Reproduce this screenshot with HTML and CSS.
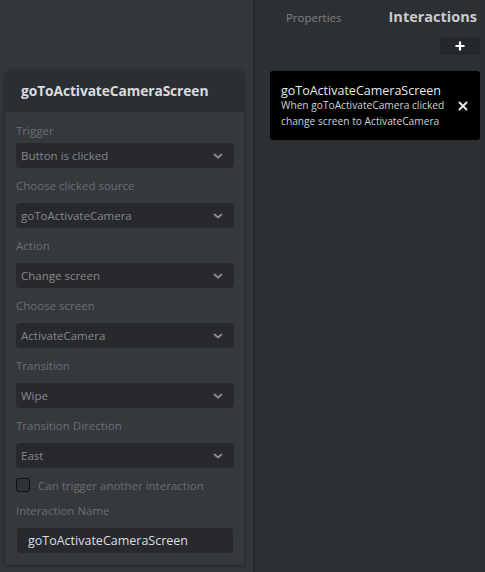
FILE: index.html
```html
<!DOCTYPE html>
<html>
<head>
<meta charset="utf-8">
<link rel="stylesheet" href="styles.css">
</head>
<body>
<div class="app">
  <div class="canvas">
    <div class="card">
      <div class="card-head">goToActivateCameraScreen</div>
      <div class="card-body">
        <div class="field first">
          <div class="label">Trigger</div>
          <div class="select"><span>Button is clicked</span><svg class="chev" viewBox="0 0 10 6" width="10" height="6"><path d="M1 1 L5 4.5 L9 1" fill="none" stroke="#8a8d92" stroke-width="1.8"/></svg></div>
        </div>
        <div class="field">
          <div class="label">Choose clicked source</div>
          <div class="select"><span>goToActivateCamera</span><svg class="chev" viewBox="0 0 10 6" width="10" height="6"><path d="M1 1 L5 4.5 L9 1" fill="none" stroke="#8a8d92" stroke-width="1.8"/></svg></div>
        </div>
        <div class="field">
          <div class="label">Action</div>
          <div class="select"><span>Change screen</span><svg class="chev" viewBox="0 0 10 6" width="10" height="6"><path d="M1 1 L5 4.5 L9 1" fill="none" stroke="#8a8d92" stroke-width="1.8"/></svg></div>
        </div>
        <div class="field">
          <div class="label">Choose screen</div>
          <div class="select"><span>ActivateCamera</span><svg class="chev" viewBox="0 0 10 6" width="10" height="6"><path d="M1 1 L5 4.5 L9 1" fill="none" stroke="#8a8d92" stroke-width="1.8"/></svg></div>
        </div>
        <div class="field">
          <div class="label">Transition</div>
          <div class="select"><span>Wipe</span><svg class="chev" viewBox="0 0 10 6" width="10" height="6"><path d="M1 1 L5 4.5 L9 1" fill="none" stroke="#8a8d92" stroke-width="1.8"/></svg></div>
        </div>
        <div class="field">
          <div class="label">Transition Direction</div>
          <div class="select"><span>East</span><svg class="chev" viewBox="0 0 10 6" width="10" height="6"><path d="M1 1 L5 4.5 L9 1" fill="none" stroke="#8a8d92" stroke-width="1.8"/></svg></div>
        </div>
        <div class="check-row">
          <span class="checkbox"></span>
          <span class="check-label">Can trigger another interaction</span>
        </div>
        <div class="field name-field">
          <div class="label">Interaction Name</div>
          <div class="input">goToActivateCameraScreen</div>
        </div>
      </div>
    </div>
  </div>
  <div class="panel">
    <div class="tabs">
      <span class="tab">Properties</span>
      <span class="tab active">Interactions</span>
    </div>
    <div class="add-row">
      <div class="add-btn"><svg viewBox="0 0 10 10" width="10" height="10"><path d="M5 0.5 V9.5 M0.5 5 H9.5" stroke="#ffffff" stroke-width="2.2"/></svg></div>
    </div>
    <div class="item">
      <div class="item-text">
        <div class="item-title">goToActivateCameraScreen</div>
        <div class="item-desc">When goToActivateCamera clicked<br>change screen to ActivateCamera</div>
      </div>
      <svg class="close" viewBox="0 0 10 10" width="10" height="10"><path d="M1 1 L9 9 M9 1 L1 9" stroke="#e6e6e6" stroke-width="2"/></svg>
    </div>
  </div>
</div>
</body>
</html>
```

FILE: styles.css
```css
* { box-sizing: border-box; }
html, body { margin: 0; padding: 0; }
body {
  width: 485px;
  height: 572px;
  overflow: hidden;
  font-family: "Open Sans", "Noto Sans", sans-serif;
  background: #33363b;
}
.app {
  display: flex;
  width: 485px;
  height: 572px;
}
.canvas {
  flex: 0 0 253px;
  background: #33363b;
  padding: 70px 0 0 5px;
}
.card {
  width: 239px;
  border-radius: 6px 6px 0 0;
  box-shadow: 0 1px 4px rgba(0,0,0,0.35);
  background: #35383d;
}
.card-head {
  height: 42px;
  line-height: 42px;
  padding-left: 16px;
  background: #2b2e32;
  border-radius: 6px 6px 0 0;
  color: #d9dbde;
  font-weight: 700;
  font-size: 13.8px;
  letter-spacing: -0.1px;
}
.card-body {
  background: #35383d;
  padding: 9px 9px 11px 10px;
  height: 453px;
  margin: 0 1px;
}
.field {
  display: flex;
  flex-direction: column;
  margin-bottom: 8px;
}
.label {
  height: 20px;
  line-height: 20px;
  font-size: 11.5px;
  color: #6c6f74;
  margin-bottom: 7px;
}
.field.first .label { margin-top: 0; margin-bottom: 2px; }
.select {
  height: 25px;
  background: #27292d;
  border-radius: 4px;
  display: flex;
  align-items: center;
  justify-content: space-between;
  padding: 0 11px 0 5px;
  color: #85888c;
  font-size: 11.5px;
}
.chev { display: block; }
.check-row {
  display: flex;
  align-items: center;
  height: 14px;
  margin-top: 10px;
  margin-bottom: 9px;
}
.checkbox {
  width: 14px;
  height: 14px;
  border: 1px solid #111214;
  border-radius: 3px;
  background: #2f3236;
  margin-right: 8px;
}
.check-label {
  font-size: 11.5px;
  color: #6c6f74;
}
.name-field .label { margin-bottom: 7px; }
.input {
  height: 25px;
  margin: 0 1px;
  background: #27292d;
  border-radius: 4px;
  padding-left: 11px;
  line-height: 25px;
  color: #dcdee0;
  font-size: 12.5px;
}
.panel {
  flex: 1;
  background: #2d3033;
  border-left: 2px solid #292b2e;
  padding: 0 5px 0 15px;
}
.tabs {
  display: flex;
  justify-content: flex-end;
  align-items: baseline;
  height: 35px;
  padding-top: 7px;
  padding-right: 3px;
}
.tab {
  font-size: 11.5px;
  color: #7c8085;
  margin-right: 47px;
}
.tab.active {
  font-size: 14.5px;
  font-weight: 700;
  color: #c9cbcf;
  margin-right: 0;
}
.add-row {
  display: flex;
  justify-content: flex-end;
  height: 36px;
  padding-top: 2px;
}
.add-btn {
  width: 40px;
  height: 18px;
  background: #25282b;
  border-radius: 3px;
  display: flex;
  align-items: center;
  justify-content: center;
}
.add-btn svg { display: block; }
.item {
  height: 69px;
  background: #000000;
  border-radius: 3px;
  display: flex;
  align-items: center;
  padding: 1px 12px 0 11px;
  justify-content: space-between;
}
.item-title {
  color: #e8e8e8;
  font-size: 12.5px;
  line-height: 15px;
}
.item-desc {
  color: #cfd1d4;
  font-size: 10.2px;
  line-height: 15.5px;
}
.close { display: block; }
```
